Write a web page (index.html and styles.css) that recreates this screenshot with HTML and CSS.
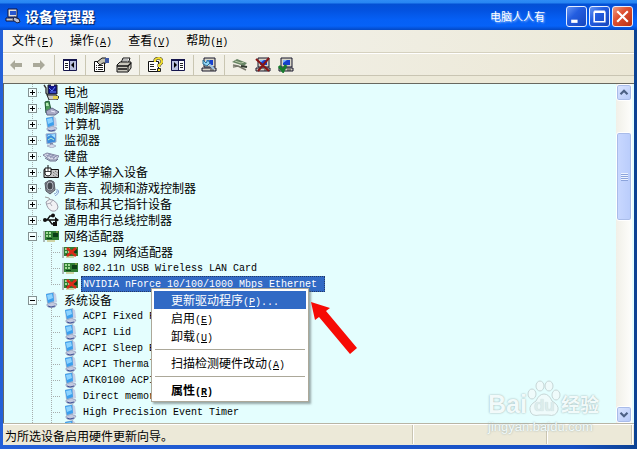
FILE: index.html
```html
<!DOCTYPE html>
<html lang="zh-CN">
<head>
<meta charset="utf-8">
<title>设备管理器</title>
<link rel="stylesheet" href="styles.css">
</head>
<body>
<svg class="defs" aria-hidden="true">
  <symbol id="pc" viewBox="0 0 16 16">
    <path d="M4 12l5-2 5 2-2 3-5 1-3-2z" fill="#c3c9df" stroke="#7f89aa" stroke-width=".6"/>
    <path d="M3 2l8-2 2 9-7 3-2-1z" fill="#9fb0cc"/>
    <path d="M3 2l7-1 1 8-6 2z" fill="#3aa0ee"/>
    <path d="M4 3l5-1 1 4-5 2z" fill="#8dd3ff"/>
    <path d="M11 1l2 1 1 8-3 1z" fill="#c5cfe6"/>
    <path d="M5 14l3 1 4-1" stroke="#3d4f94" fill="none"/>
  </symbol>
  <symbol id="monitor" viewBox="0 0 16 16">
    <path d="M3 2l10-1v9l-9 2z" fill="#3a8ddc" stroke="#a4b0cc"/>
    <path d="M4 5l4-2 4 3v-4l-7 1z" fill="#a5e0ff"/>
    <path d="M5 8l3-2 3 2" stroke="#b6f0cf" fill="none"/>
    <path d="M7 11h3v2H7z" fill="#7d88a8"/>
    <path d="M4 14l5-2 4 2-4 2z" fill="#d6daea" stroke="#8790ad" stroke-width=".6"/>
  </symbol>
  <symbol id="battery" viewBox="0 0 16 16">
    <path d="M1 1l2 3v5l3 4" fill="none" stroke="#333" stroke-width="1.4"/>
    <path d="M5 1h9v9H5z" fill="#11158a" stroke="#222"/>
    <path d="M8 0h3v2H8z" fill="#ddd"/>
    <path d="M6 4l3 3 3-4M7 8h6" stroke="#6585ff" fill="none"/>
    <path d="M4 11h9l3 2-2 3H6z" fill="#c9c9c9" stroke="#222"/>
    <path d="M10 12h5v3h-5z" fill="#e5d24c"/>
  </symbol>
  <symbol id="modem" viewBox="0 0 16 16">
    <path d="M2 2l4-1 2 9-5 3z" fill="#4b9955" stroke="#1c5631"/>
    <path d="M3 3h2l1 3H3z" fill="#b4eab2"/>
    <path d="M3 11l6-3 7 4-4 3H4z" fill="#a9aac5" stroke="#626888"/>
    <path d="M8 11l4 1" stroke="#eef"/>
  </symbol>
  <symbol id="keyboard" viewBox="0 0 16 16">
    <path d="M0 7l4-2 12 3-3 4H7z" fill="#d9dbe9" stroke="#8084a0"/>
    <path d="M3 7l9 3M5 6l9 3M4 9l4-3M7 10l4-3M10 11l3-3" stroke="#858aac" stroke-width=".8"/>
    <path d="M2 10l5 3h6l2-2" fill="none" stroke="#6e738e"/>
  </symbol>
  <symbol id="hid" viewBox="0 0 16 16">
    <path d="M1 5.500h14.500v8H1z" fill="#c8c8c8" stroke="#111"/>
    <path d="M10 8l5 4M10 11l3 2M12 7l3 2" stroke="#555" stroke-dasharray="1 1"/>
    <path d="M5 1v3M2 4h6v6q-1 2-3 2t-3-2z" fill="#fff" stroke="#111"/>
    <path d="M5 4v3M2 7.500h6" stroke="#111" stroke-width=".8"/>
  </symbol>
  <symbol id="sound" viewBox="0 0 16 16">
    <path d="M2 3l5-3 4 2 1 8-5 4-4-3z" fill="#8e929c" stroke="#54575f"/>
    <ellipse cx="7" cy="6" rx="4" ry="5" fill="#b9bcc5" stroke="#575b64"/>
    <ellipse cx="7" cy="6" rx="2.500" ry="3.500" fill="#43464d"/>
    <path d="M11 14q4-1 3-5M12 16q4-2 4-6" fill="none" stroke="#7f9dcf"/>
  </symbol>
  <symbol id="mouse" viewBox="0 0 16 16">
    <path d="M2 1q5 0 6 4" fill="none" stroke="#999"/>
    <path d="M3 6q3-4 7-2 5 3 5 7-1 5-6 4-5-2-6-9z" fill="#f1f1f4" stroke="#9c9ca8"/>
    <path d="M4 8q4 0 6-4M7 7l2 3" fill="none" stroke="#aaaab5"/>
  </symbol>
  <symbol id="usb" viewBox="0 0 16 16">
    <path d="M2 8h12M4 8l3-4h3M6 8l3 4h3" fill="none" stroke="#111" stroke-width="1.300"/>
    <circle cx="2" cy="8" r="2" fill="#111"/><circle cx="10" cy="3.500" r="2" fill="#111"/>
    <path d="M12 5l4 3-4 3zM10 10h4v4h-4z" fill="#111"/>
  </symbol>
  <symbol id="nic" viewBox="0 0 16 16">
    <path d="M1 3v11" stroke="#777"/>
    <path d="M2 3h14v9H2z" fill="#2f7d33"/>
    <path d="M3 4h2v2H3zM6 4h2v2H6zM3 7h2v2H3zM6 7h2v2H6z" fill="#a2dc96"/>
    <path d="M10 5h5v4h-5zM4 10h5v1H4z" fill="#0b3f17"/>
    <path d="M4 13h8M13 4h2" stroke="#b9a94a"/>
  </symbol>
  <symbol id="nic-off" viewBox="0 0 16 16">
    <use href="#nic"/>
    <path d="M5 4l9 8M14 4l-9 8" stroke="#d92c18" stroke-width="2.600"/>
  </symbol>
  <symbol id="computer" viewBox="0 0 16 16">
    <path d="M3 1h11v9H3z" fill="#d8d5c7" stroke="#17172c"/>
    <path d="M5 3h7v5H5z" fill="#1740ce"/>
    <path d="M5 3h4l-4 3z" fill="#7eb8ff"/>
    <path d="M1 11h14v3H1z" fill="#d8d5c7" stroke="#17172c"/>
    <path d="M9 13h4" stroke="#333"/>
  </symbol>
  <symbol id="app" viewBox="0 0 16 16">
    <path d="M3 1h9v8H3z" fill="#e1e1e1" stroke="#10133d"/>
    <path d="M5 3h6v4H5z" fill="#2856ce"/>
    <path d="M1 10h12v3H1z" fill="#ccc" stroke="#10133d"/>
    <path d="M9 9l5 2 1 3-3 1-4-3z" fill="#b4bdd6" stroke="#20233e"/>
  </symbol>
  <symbol id="back" viewBox="0 0 16 16"><path d="M2 8l5-5v3h7v4H7v3z" fill="#aaa99a"/></symbol>
  <symbol id="forward" viewBox="0 0 16 16"><path d="M14 8L9 3v3H2v4h7v3z" fill="#aaa99a"/></symbol>
  <symbol id="pane" viewBox="0 0 16 16">
    <path d="M1.500 2.500h13v11h-13z" fill="#fff" stroke="#15154c"/><path d="M1 2h14v2H1z" fill="#15154c"/>
    <path d="M8 4h6v9H8z" fill="#b9c0de"/><path d="M7.500 3v10" stroke="#15154c"/>
    <path d="M3 6.500h3M3 8.500h3M3 10.500h3" stroke="#222"/><path d="M12 5v6L9 8z" fill="#000"/>
  </symbol>
  <symbol id="pane-right" viewBox="0 0 16 16">
    <path d="M1.500 2.500h13v11h-13z" fill="#fff" stroke="#15154c"/><path d="M1 2h14v2H1z" fill="#15154c"/>
    <path d="M2 4h6v9H2z" fill="#b9c0de"/><path d="M8.500 3v10" stroke="#15154c"/>
    <path d="M10 6.500h3M10 8.500h3M10 10.500h3" stroke="#222"/><path d="M4 5v6l3-3z" fill="#000"/>
  </symbol>
  <symbol id="props" viewBox="0 0 16 16">
    <path d="M1.500 4.500h10v10h-10z" fill="#fff" stroke="#111"/>
    <path d="M3 8.500h1M5 8.500h5M3 10.500h1M5 10.500h5M3 12.500h1M5 12.500h5" stroke="#222"/>
    <path d="M4 5l5-4h4v5h-3L7 8z" fill="#c3c1b2" stroke="#111"/>
    <path d="M12 1h4v5h-4z" fill="#3d58a6"/>
  </symbol>
  <symbol id="print" viewBox="0 0 16 16">
    <path d="M5 6l2-5h7l-2 6z" fill="#fff" stroke="#111"/>
    <path d="M7 3h5M6 5h5" stroke="#777"/>
    <path d="M1 8l3-3h11v6l-3 4H1z" fill="#c9c7bd" stroke="#111"/>
    <path d="M1 9h11l3-3M2 12h9" fill="none" stroke="#111" stroke-width="1.300"/>
    <path d="M12 9v5" stroke="#111"/>
  </symbol>
  <symbol id="help" viewBox="0 0 16 16">
    <path d="M1.500 4.500h10v10h-10z" fill="#fff" stroke="#111"/>
    <path d="M3 7.500h4M3 9.500h4M3 12.500h6" stroke="#222"/>
    <path d="M8 5V3q1-2 4-2 3 1 3 4-1 2-3 3v2" fill="none" stroke="#333" stroke-width="3"/>
    <path d="M8 5V3q1-2 4-2 3 1 3 4-1 2-3 3v2" fill="none" stroke="#f2df32" stroke-width="2"/>
    <path d="M10.500 11.500h3v3h-3z" fill="#f2df32" stroke="#222"/>
  </symbol>
  <symbol id="scan" viewBox="0 0 16 16">
    <use href="#computer"/>
    <path d="M7 6l6 6" stroke="#9fc4e6" stroke-width="2"/>
    <path d="M2 3l3 3 2-3 2 3-3 3-4-2z" fill="#8fd3f5" stroke="#2b6d91"/>
  </symbol>
  <symbol id="driver" viewBox="0 0 16 16">
    <path d="M0 5l5-3 10 4-3 3z" fill="#688564"/>
    <path d="M3 4l6 2 3-1" fill="none" stroke="#b7c7a6"/>
    <path d="M1 8l5 1 8 4M1 10l5-1" fill="none" stroke="#77786b" stroke-width="1.500"/>
    <path d="M9 9l6 1" stroke="#30392e" stroke-width="2"/>
  </symbol>
  <symbol id="uninstall" viewBox="0 0 16 16"><use href="#computer"/><path d="M1 2l13 12M14 1L3 14" stroke="#861515" stroke-width="2"/></symbol>
  <symbol id="enable" viewBox="0 0 16 16"><use href="#computer"/><path d="M1 9l4 5 3-6" fill="none" stroke="#187b2d" stroke-width="3"/></symbol>
</svg>

<div class="window">
  <header class="titlebar">
    <svg class="icon"><use href="#app"/></svg>
    <h1>设备管理器</h1>
    <span class="signature">电脑人人有</span>
    <div class="controls">
      <button class="control" aria-label="最小化"><svg viewBox="0 0 16 16"><path d="M3 11h6v3H3z" fill="#fff"/></svg></button>
      <button class="control" aria-label="最大化"><svg viewBox="0 0 16 16"><path d="M3 4h10v9H3zM3 3h10" fill="none" stroke="#fff" stroke-width="1.500"/></svg></button>
      <button class="control close" aria-label="关闭"><svg viewBox="0 0 16 16"><path d="M3 3l10 10M13 3L3 13" stroke="#fff" stroke-width="2"/></svg></button>
    </div>
  </header>

  <nav class="menubar">
    <button>文件<span class="latin">(<u>F</u>)</span></button>
    <button>操作<span class="latin">(<u>A</u>)</span></button>
    <button>查看<span class="latin">(<u>V</u>)</span></button>
    <button>帮助<span class="latin">(<u>H</u>)</span></button>
  </nav>

  <div class="toolbar">
    <button aria-label="后退" disabled><svg class="icon"><use href="#back"/></svg></button>
    <button aria-label="前进" disabled><svg class="icon"><use href="#forward"/></svg></button>
    <span class="divider"></span>
    <button aria-label="显示控制台树"><svg class="icon"><use href="#pane"/></svg></button>
    <span class="divider"></span>
    <button aria-label="属性"><svg class="icon"><use href="#props"/></svg></button>
    <button aria-label="打印"><svg class="icon"><use href="#print"/></svg></button>
    <span class="divider"></span>
    <button aria-label="帮助"><svg class="icon"><use href="#help"/></svg></button>
    <button aria-label="显示操作窗格"><svg class="icon"><use href="#pane-right"/></svg></button>
    <span class="divider"></span>
    <button aria-label="扫描检测硬件改动"><svg class="icon"><use href="#scan"/></svg></button>
    <span class="divider"></span>
    <button aria-label="更新驱动程序"><svg class="icon"><use href="#driver"/></svg></button>
    <button aria-label="卸载"><svg class="icon"><use href="#uninstall"/></svg></button>
    <button aria-label="启用"><svg class="icon"><use href="#enable"/></svg></button>
  </div>

  <main class="client">
    <ul class="tree">
      <li><div class="row"><span class="cell line stem"><button class="toggle plus" aria-label="展开"></button></span><svg class="icon"><use href="#battery"/></svg><span class="label">电池</span></div></li>
      <li><div class="row"><span class="cell line stem"><button class="toggle plus" aria-label="展开"></button></span><svg class="icon"><use href="#modem"/></svg><span class="label">调制解调器</span></div></li>
      <li><div class="row"><span class="cell line stem"><button class="toggle plus" aria-label="展开"></button></span><svg class="icon"><use href="#pc"/></svg><span class="label">计算机</span></div></li>
      <li><div class="row"><span class="cell line stem"><button class="toggle plus" aria-label="展开"></button></span><svg class="icon"><use href="#monitor"/></svg><span class="label">监视器</span></div></li>
      <li><div class="row"><span class="cell line stem"><button class="toggle plus" aria-label="展开"></button></span><svg class="icon"><use href="#keyboard"/></svg><span class="label">键盘</span></div></li>
      <li><div class="row"><span class="cell line stem"><button class="toggle plus" aria-label="展开"></button></span><svg class="icon"><use href="#hid"/></svg><span class="label">人体学输入设备</span></div></li>
      <li><div class="row"><span class="cell line stem"><button class="toggle plus" aria-label="展开"></button></span><svg class="icon"><use href="#sound"/></svg><span class="label">声音、视频和游戏控制器</span></div></li>
      <li><div class="row"><span class="cell line stem"><button class="toggle plus" aria-label="展开"></button></span><svg class="icon"><use href="#mouse"/></svg><span class="label">鼠标和其它指针设备</span></div></li>
      <li><div class="row"><span class="cell line stem"><button class="toggle plus" aria-label="展开"></button></span><svg class="icon"><use href="#usb"/></svg><span class="label">通用串行总线控制器</span></div></li>
      <li><div class="row"><span class="cell line stem"><button class="toggle" aria-label="折叠"></button></span><svg class="icon"><use href="#nic"/></svg><span class="label">网络适配器</span></div>
        <ul>
          <li class="row"><span class="cell line"></span><span class="cell line stem"></span><svg class="icon"><use href="#nic-off"/></svg><span class="label"><span class="latin">1394 </span>网络适配器</span></li>
          <li class="row"><span class="cell line"></span><span class="cell line stem"></span><svg class="icon"><use href="#nic"/></svg><span class="label latin">802.11n USB Wireless LAN Card</span></li>
          <li class="row"><span class="cell line"></span><span class="cell line stem last"></span><svg class="icon"><use href="#nic-off"/></svg><span class="label latin selected">NVIDIA nForce 10/100/1000 Mbps Ethernet</span></li>
        </ul>
      </li>
      <li><div class="row"><span class="cell line stem"><button class="toggle" aria-label="折叠"></button></span><svg class="icon"><use href="#pc"/></svg><span class="label">系统设备</span></div>
        <ul>
          <li class="row"><span class="cell line"></span><span class="cell line stem"></span><svg class="icon"><use href="#pc"/></svg><span class="label latin">ACPI Fixed F</span></li>
          <li class="row"><span class="cell line"></span><span class="cell line stem"></span><svg class="icon"><use href="#pc"/></svg><span class="label latin">ACPI Lid</span></li>
          <li class="row"><span class="cell line"></span><span class="cell line stem"></span><svg class="icon"><use href="#pc"/></svg><span class="label latin">ACPI Sleep B</span></li>
          <li class="row"><span class="cell line"></span><span class="cell line stem"></span><svg class="icon"><use href="#pc"/></svg><span class="label latin">ACPI Thermal</span></li>
          <li class="row"><span class="cell line"></span><span class="cell line stem"></span><svg class="icon"><use href="#pc"/></svg><span class="label latin">ATK0100 ACPI</span></li>
          <li class="row"><span class="cell line"></span><span class="cell line stem"></span><svg class="icon"><use href="#pc"/></svg><span class="label latin">Direct memor</span></li>
          <li class="row"><span class="cell line"></span><span class="cell line stem"></span><svg class="icon"><use href="#pc"/></svg><span class="label latin">High Precision Event Timer</span></li>
          <li class="row"><span class="cell line"></span><span class="cell line stem"></span><svg class="icon"><use href="#pc"/></svg></li>
        </ul>
      </li>
    </ul>
    <div class="scrollbar">
      <button class="scroll-button" aria-label="向上滚动"><svg viewBox="0 0 16 16"><path d="M4 10l4-4 4 4" fill="none" stroke="#4d6185" stroke-width="2.500"/></svg></button>
      <span class="before"></span>
      <span class="thumb"><i></i></span>
      <span class="after"></span>
      <button class="scroll-button" aria-label="向下滚动"><svg viewBox="0 0 16 16"><path d="M4 6l4 4 4-4" fill="none" stroke="#4d6185" stroke-width="2.500"/></svg></button>
    </div>
  </main>

  <footer class="statusbar">
    <span class="status-main">为所选设备启用硬件更新向导。</span>
    <span class="status-mid"></span>
    <span class="status-end"></span>
  </footer>
</div>

<div class="context-menu" role="menu">
  <button class="active" role="menuitem">更新驱动程序<span class="latin">(<u>P</u>)...</span></button>
  <button role="menuitem">启用<span class="latin">(<u>E</u>)</span></button>
  <button role="menuitem">卸载<span class="latin">(<u>U</u>)</span></button>
  <hr>
  <button role="menuitem">扫描检测硬件改动<span class="latin">(<u>A</u>)</span></button>
  <hr>
  <button class="default" role="menuitem">属性<span class="latin">(<u>R</u>)</span></button>
</div>

<svg class="pointer" viewBox="0 0 48 54" aria-hidden="true"><path d="M1 1l19 6-4 3 31 37-7 6L9 16l-4 3z" fill="#f60b05"/></svg>

<div class="watermark" aria-hidden="true">
  <div class="brand">
    <span>Bai</span>
    <span class="paw"><svg viewBox="0 0 34 36"><g><ellipse cx="5" cy="14" rx="4" ry="5"/><ellipse cx="13" cy="6" rx="4" ry="5"/><ellipse cx="22" cy="6" rx="4" ry="5"/><ellipse cx="29" cy="15" rx="4" ry="5"/><path d="M17 14q5 0 8 7 7 4 6 9-2 7-10 5h-8q-9 2-10-5-1-5 6-9 3-7 8-7z"/></g></svg><b>du</b></span>
    <span class="cn">经验</span>
  </div>
  <div class="domain">jingyan.baidu.com</div>
</div>
</body>
</html>
```
FILE: styles.css
```css
* { box-sizing: border-box; }

body {
  margin: 0;
  height: 100vh;
  overflow: hidden;
  position: relative;
  background: #1252c8;
  color: #000;
  font: 12px/16px "Noto Sans CJK SC", sans-serif;
}

button {
  margin: 0;
  padding: 0;
  border: 0;
  background: none;
  color: inherit;
  font: inherit;
}

ul { margin: 0; padding: 0; list-style: none; }

.defs { position: absolute; width: 0; height: 0; }
.icon { flex: none; width: 16px; height: 16px; }
.latin { font-family: "Liberation Mono", monospace; font-size: 10px; white-space: pre; }

.window {
  display: flex;
  flex-direction: column;
  height: 100%;
  padding: 0 3px 4px;
  background: linear-gradient(90deg, #2460d8, #1650c4 90%, #0b4292);
}

.titlebar {
  flex: none;
  display: flex;
  align-items: center;
  height: 30px;
  margin: 0 -3px;
  padding: 2px 4px 0 5px;
  background: linear-gradient(#2f8cf5 0, #2684f2 3px, #0450d4 4px, #0352df 10px, #0560f6 20px, #0662f8 26px, #0348c4 30px);
  color: #fff;
}
.titlebar h1 {
  flex: 1;
  margin: 0 0 0 4px;
  font-size: 14px;
  line-height: 20px;
  text-shadow: 1px 1px 1px #06215f;
}
.signature { margin-right: 21px; font-size: 11px; text-shadow: 1px 1px 2px #9ac4ff; }
.controls { display: flex; gap: 2px; }
.control {
  width: 21px;
  height: 21px;
  padding: 1px;
  border: 1px solid #e4edff;
  border-radius: 3px;
  background: linear-gradient(135deg, #6595f4, #235de0 40%, #1746bd);
}
.control svg { display: block; width: 100%; height: 100%; }
.close { background: linear-gradient(135deg, #ef9b82, #df5132 40%, #b72f13); }

.menubar {
  flex: none;
  display: flex;
  gap: 16px;
  height: 23px;
  padding: 0 9px;
  border-bottom: 1px solid #d5d1bf;
  background: linear-gradient(90deg, #f5f5f2, #ece9d8);
}
.menubar button { height: 22px; }

.toolbar {
  flex: none;
  display: flex;
  align-items: center;
  height: 23px;
  padding-left: 1px;
  border-top: 1px solid #fff;
  border-bottom: 1px solid #c9c5b3;
  background: linear-gradient(90deg, #f5f5f0, #ebe7d5);
}
.toolbar button { width: 23px; height: 20px; }
.toolbar .icon { display: block; margin: 2px auto; }
.divider { width: 8px; height: 20px; background: linear-gradient(#c9c6b2, #c9c6b2) 4px 0 / 1px 100% no-repeat; }

.client {
  flex: 1;
  min-height: 0;
  display: flex;
  border-top: 7px solid #ece9d8;
  box-shadow: inset 1px 1px #68685f;
  background: #e4fefe;
  padding: 1px 2px 0 1px;
}
.tree { flex: 1; overflow: hidden; padding-left: 19px; }
.row { display: flex; height: 16px; white-space: nowrap; }
.row > .icon { margin: 0 3px 0 1px; }
.cell { position: relative; flex: none; width: 19px; height: 16px; }
.line { background: repeating-linear-gradient(#a6adad 0 1px, transparent 1px 2px) 9px 0 / 1px 100% no-repeat; }
.line.last { background-size: 1px 9px; }
.stem::after {
  content: "";
  position: absolute;
  left: 9px;
  right: 0;
  top: 8px;
  height: 1px;
  background: repeating-linear-gradient(90deg, #a6adad 0 1px, transparent 1px 2px);
}
.toggle {
  position: absolute;
  z-index: 1;
  left: 5px;
  top: 4px;
  width: 9px;
  height: 9px;
  border: 1px solid #849292;
  background: linear-gradient(#000, #000) center / 5px 1px no-repeat, #f3ffff;
}
.plus {
  background: linear-gradient(#000, #000) center / 5px 1px no-repeat,
    linear-gradient(#000, #000) center / 1px 5px no-repeat, #f3ffff;
}
.label { height: 16px; padding: 0 2px; }
.label.latin { line-height: 18px; }
.selected { padding-right: 8px; background: #316ac5; color: #fff; outline: 1px dotted #223a66; outline-offset: -1px; }

.scrollbar {
  flex: none;
  display: flex;
  flex-direction: column;
  width: 16px;
  background: linear-gradient(90deg, #f1f0e8, #fefefc);
}
.scroll-button {
  flex: none;
  height: 17px;
  border: 1px solid #fff;
  border-radius: 3px;
  background: linear-gradient(135deg, #dbe5ff, #b5c9f8);
  box-shadow: inset 0 0 0 1px #a9bce9;
}
.scroll-button svg { display: block; width: 14px; height: 15px; }
.before { flex: 31; }
.after { flex: 186; }
.thumb {
  flex: 88;
  display: grid;
  place-items: center;
  border: 1px solid #fff;
  border-radius: 3px;
  background: linear-gradient(90deg, #c9d8ff, #b9ccfb);
  box-shadow: inset 0 0 0 1px #a9bce9;
}
.thumb i { width: 7px; height: 8px; background: repeating-linear-gradient(#eef4ff 0 1px, #8ca4dc 1px 2px); }

.statusbar {
  flex: none;
  display: flex;
  height: 22px;
  padding: 1px 1px 1px 0;
  border-top: 1px solid #b8b5a5;
  background: #ece9d8;
  box-shadow: inset 0 1px #fff;
  line-height: 22px;
}
.statusbar span { border-right: 1px solid #fff; box-shadow: inset -1px 0 #c9c5b2; }
.status-main { flex: 411; padding-left: 2px; }
.status-mid { flex: 134; }
.status-end { flex: 85; }

.context-menu {
  position: absolute;
  left: 151px;
  top: 288px;
  width: 158px;
  padding: 2px;
  border: 1px solid #aca899;
  background: #fff;
  box-shadow: 2px 2px 2px #63707099;
}
.context-menu button { display: block; width: 100%; height: 18px; padding-left: 17px; text-align: left; line-height: 18px; }
.context-menu .active { background: #316ac5; color: #fff; }
.context-menu .default { font-weight: bold; }
.context-menu hr { height: 1px; margin: 4px 1px; border: 0; background: #aca899; }

.pointer { position: absolute; left: 310px; top: 301px; width: 48px; height: 54px; }

.watermark {
  position: absolute;
  left: 488px;
  top: 380px;
  color: #f2fafa;
  font-family: "Liberation Sans", "Noto Sans CJK SC", sans-serif;
  text-shadow: 0 0 2px #93a8a8;
}
.brand { display: flex; align-items: flex-end; height: 38px; font-size: 25px; font-weight: bold; line-height: 28px; }
.paw { position: relative; width: 34px; height: 38px; }
.paw svg { width: 34px; height: 36px; fill: #effbfb; stroke: #c6d6d6; }
.paw b { position: absolute; left: 7px; top: 16px; font-size: 17px; line-height: 20px; color: #dcecec; text-shadow: 0 0 1px #c0d2d2; }
.cn { font-size: 19px; line-height: 24px; }
.domain { padding-top: 2px; font-size: 13px; line-height: 14px; }
```
